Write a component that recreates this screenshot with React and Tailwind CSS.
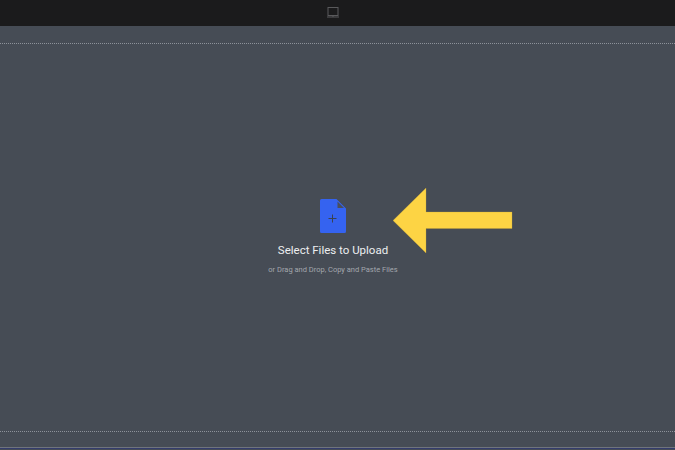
export default function App() {
  return (
    <div className="flex h-[450px] w-[675px] flex-col overflow-hidden bg-[#464c55] font-['Roboto',sans-serif]">
      <header className="flex h-[26px] shrink-0 items-center justify-center bg-[#1b1b1c] pr-[9px] pb-[2px]">
        <svg width="12" height="11" viewBox="0 0 12 11" fill="none" stroke="#5a5a5c" strokeWidth="1">
          <rect x="1" y="0.5" width="10" height="8" />
          <path d="M0 10H12M5 9H7" />
        </svg>
      </header>

      <div className="h-[18px] shrink-0 border-b border-dotted border-[#8d929a]" />

      <main className="relative flex h-[387px] shrink-0 flex-col items-center pt-[155px] pr-[9px]">
        <svg width="26" height="34" viewBox="0 0 26 34">
          <path d="M1.5 0H16.5L26 9.5V32.5A1.5 1.5 0 0 1 24.5 34H1.5A1.5 1.5 0 0 1 0 32.5V1.5A1.5 1.5 0 0 1 1.5 0Z" fill="#3563f0" />
          <path d="M17.5 2.5L24 9H17.5Z" fill="#4b4f5a" />
          <path d="M12.5 15.5V23.5M8.5 19.5H16.5" stroke="#3a4250" strokeWidth="1" />
        </svg>
        <p className="mt-[10px] text-[11.5px] leading-[15px] text-[#eceef0]">Select Files to Upload</p>
        <p className="mt-[6px] text-[7.5px] leading-[11px] text-[#a3a7ad]">or Drag and Drop, Copy and Paste Files</p>

        <svg width="120" height="68" viewBox="0 0 120 68" className="absolute left-[393px] top-[143px]">
          <path d="M0 33.5L33 1V25H119V41.5H33V66Z" fill="#fdd444" stroke="#c9a63a" strokeWidth="0.3" />
        </svg>
      </main>

      <div className="h-[16px] shrink-0 border-t border-dotted border-[#8d929a]" />
      <div className="h-px shrink-0 bg-[#6f747c]" />
      <div className="h-px shrink-0 bg-[#343c6c]" />
    </div>
  );
}
